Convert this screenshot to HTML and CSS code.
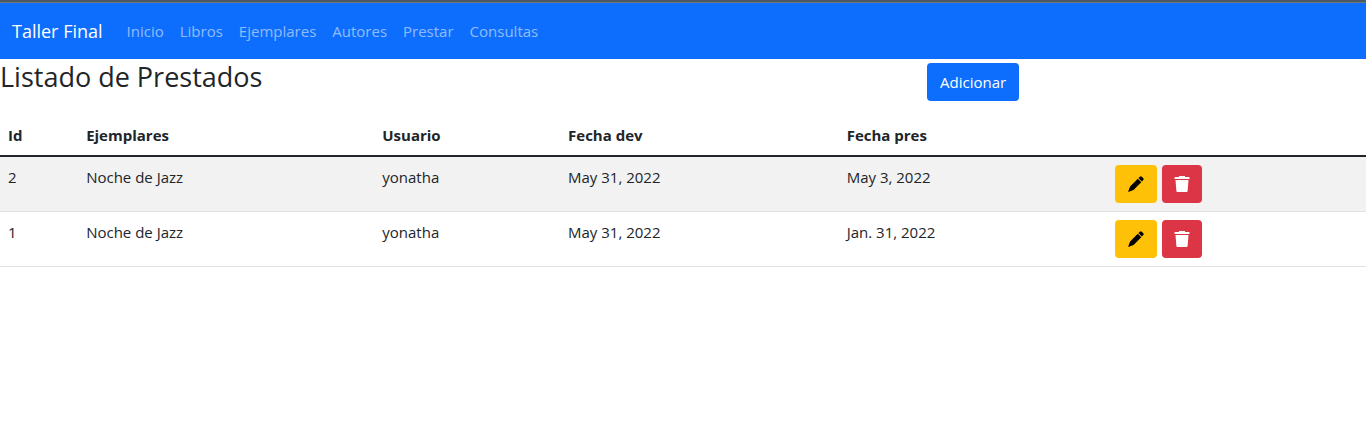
FILE: index.html
```html
<!DOCTYPE html>
<html lang="es">
<head>
<meta charset="utf-8">
<meta name="viewport" content="width=device-width, initial-scale=1">
<title>Listado de Prestados</title>
<link rel="stylesheet" href="styles.css">
</head>
<body>
<svg class="sprite" aria-hidden="true">
  <symbol id="pencil" viewBox="0 0 18 18">
    <path d="M12.9 1.7q1-.9 1.9 0l1.5 1.5q.9.9 0 1.8l-1.5 1.5-3.4-3.4zM10.8 3.7l3.5 3.5-7.3 7.2q-.5.5-1.2.8l-3.9 1.6q-.8.2-.6-.6l1.5-4q.3-.8.8-1.3z"/>
  </symbol>
  <symbol id="trash" viewBox="0 0 16 16">
    <path d="M5 0h6v1h4q.5 0 .5.5v1q0 .5-.5.5H1q-.5 0-.5-.5v-1Q.5 1 1 1h4zM1.5 4h13l-.9 11q-.1 1-1.1 1h-9q-1 0-1.1-1z"/>
  </symbol>
</svg>
<nav class="navbar">
  <a class="brand" href="#">Taller Final</a>
  <ul class="nav-list">
    <li><a class="nav-link" href="#">Inicio</a></li>
    <li><a class="nav-link" href="#">Libros</a></li>
    <li><a class="nav-link" href="#">Ejemplares</a></li>
    <li><a class="nav-link" href="#">Autores</a></li>
    <li><a class="nav-link" href="#">Prestar</a></li>
    <li><a class="nav-link" href="#">Consultas</a></li>
  </ul>
</nav>
<main>
  <header class="page-head">
    <h1 class="title">Listado de Prestados</h1>
    <div><a class="btn btn-primary" href="#">Adicionar</a></div>
  </header>
  <table class="table">
    <colgroup><col class="c-id"><col class="c-copy"><col class="c-user"><col class="c-due"><col class="c-loan"><col></colgroup>
    <thead>
      <tr><th scope="col">Id</th><th scope="col">Ejemplares</th><th scope="col">Usuario</th><th scope="col">Fecha dev</th><th scope="col">Fecha pres</th><td></td></tr>
    </thead>
    <tbody>
      <tr>
        <td>2</td><td>Noche de Jazz</td><td>yonatha</td><td>May 31, 2022</td><td>May 3, 2022</td>
        <td><div class="actions">
          <button class="btn btn-warning" type="button" aria-label="Editar"><svg class="icon-pencil"><use href="#pencil"/></svg></button>
          <button class="btn btn-danger" type="button" aria-label="Eliminar"><svg class="icon-trash"><use href="#trash"/></svg></button>
        </div></td>
      </tr>
      <tr>
        <td>1</td><td>Noche de Jazz</td><td>yonatha</td><td>May 31, 2022</td><td>Jan. 31, 2022</td>
        <td><div class="actions">
          <button class="btn btn-warning" type="button" aria-label="Editar"><svg class="icon-pencil"><use href="#pencil"/></svg></button>
          <button class="btn btn-danger" type="button" aria-label="Eliminar"><svg class="icon-trash"><use href="#trash"/></svg></button>
        </div></td>
      </tr>
    </tbody>
  </table>
</main>
</body>
</html>
```

FILE: styles.css
```css
* { box-sizing: border-box; }
body {
  margin: 0;
  border-top: 2px solid #495a64;
  background: #fff;
  color: #212529;
  font: 15px/24px "Segoe UI", "Open Sans", "Noto Sans", sans-serif;
}
.sprite { display: none; }
.navbar {
  display: flex;
  align-items: center;
  gap: 16px;
  min-height: 57px;
  padding: 8px 12px;
  border-top: 1px solid #72777b;
  background: #0d6efd;
}
.brand { color: #fff; font-size: 18px; line-height: 30px; text-decoration: none; }
.nav-list { display: flex; flex-wrap: wrap; margin: 0; padding: 0; list-style: none; }
.nav-link { display: block; padding: 8px; color: rgba(255, 255, 255, .55); text-decoration: none; }
.page-head { display: grid; grid-template-columns: 927fr 439fr; padding: 4px 0 14px; }
.title { margin: 0; font-size: 27px; font-weight: 500; line-height: 28px; }
.btn {
  display: inline-flex;
  align-items: center;
  justify-content: center;
  height: 38px;
  padding: 0 12px;
  border: 0;
  border-radius: 4px;
  font: inherit;
  text-decoration: none;
  cursor: pointer;
}
.btn svg { fill: currentColor; }
.btn-primary { padding: 0 13px; background: #0d6efd; color: #fff; }
.btn-warning { background: #ffc107; color: #000; }
.btn-danger { background: #dc3545; color: #fff; }
.page-head div { display: flex; }
.icon-pencil { width: 18px; height: 18px; }
.icon-trash { width: 16px; height: 16px; }
.actions { display: flex; gap: 5px; }
.table { width: 100%; table-layout: fixed; border-collapse: separate; border-spacing: 0; }
.table th, .table td { padding: 8px; text-align: left; vertical-align: top; border-bottom: 1px solid #dee2e6; }
.table thead th, .table thead td { border-bottom: 2px solid #212529; }
.table th { font-weight: 700; }
.table tbody tr:nth-child(odd) { background: #f2f2f2; }
.c-id { width: 5.72%; }
.c-copy { width: 21.68%; }
.c-user { width: 13.6%; }
.c-due { width: 20.4%; }
.c-loan { width: 19.65%; }
```
